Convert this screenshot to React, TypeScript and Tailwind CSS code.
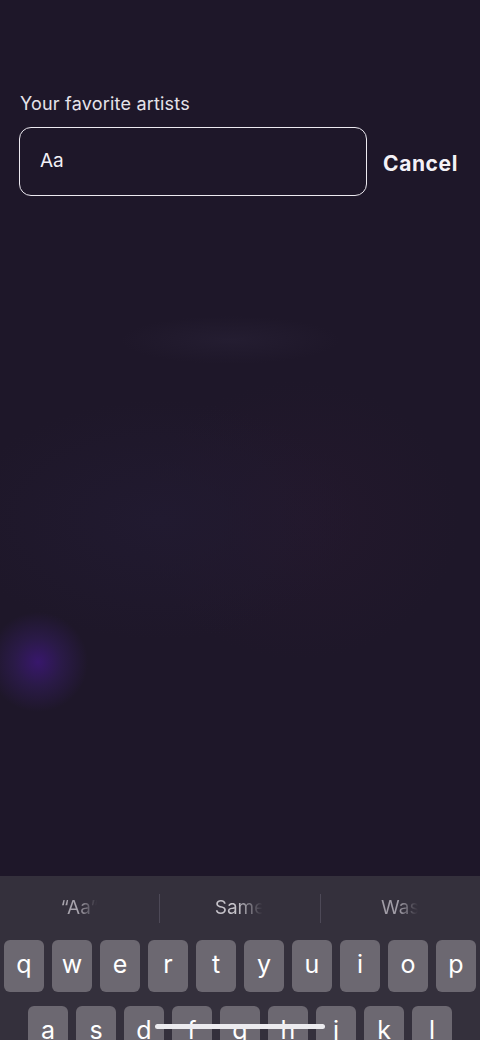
import { useState } from "react";

const ROW1 = ["q", "w", "e", "r", "t", "y", "u", "i", "o", "p"];
const ROW2 = ["a", "s", "d", "f", "g", "h", "j", "k", "l"];

const SUGGESTIONS = [
  { text: "“Aa”", from: "#a8a4ad" },
  { text: "Same", from: "#c6c3ca" },
  { text: "Was", from: "#a19da7" },
];

function Key({ label }: { label: string }) {
  return (
    <div className="w-10 h-[52px] shrink-0 rounded-[6px] bg-[#6c6871] flex items-center justify-center text-[25px] leading-none text-white pb-1">
      {label}
    </div>
  );
}

export default function App() {
  const [query, setQuery] = useState("");

  return (
    <div
      className="relative w-[480px] h-[1040px] overflow-hidden flex flex-col bg-[#1e1729]"
      style={{ fontFamily: "Inter, 'Noto Sans', sans-serif" }}
    >
      {/* fundo desfocado */}
      <div className="flex-1 flex flex-col bg-[radial-gradient(circle_at_38px_662px,#38176c_0px,#2a1a47_24px,transparent_50px),radial-gradient(ellipse_110px_24px_at_230px_340px,#241d31,transparent),radial-gradient(ellipse_200px_120px_at_160px_520px,#211a30,transparent),radial-gradient(ellipse_160px_140px_at_300px_520px,#23182c,transparent)]">
        <div className="pt-[93px] px-5">
          <label className="block text-[18px] leading-[22px] text-[#e6e3ea] tracking-[0.2px]">
            Your favorite artists
          </label>
          <div className="mt-3 flex items-center gap-4">
            <div className="w-[348px] h-[69px] -ml-px rounded-[12px] border-[1.5px] border-[#ece9f0] flex items-center px-5">
              <input
                value={query}
                onChange={(e) => setQuery(e.target.value)}
                placeholder="Aa"
                className="w-full bg-transparent text-[19px] text-white placeholder:text-[#f2f0f5] outline-none"
              />
            </div>
            <button className="text-[21px] font-bold tracking-[0.6px] text-[#f3f1f6] pt-1">Cancel</button>
          </div>
        </div>
      </div>

      {/* teclado */}
      <div className="h-[164px] shrink-0 overflow-hidden bg-[#34303c] flex flex-col">
        <div className="h-[64px] shrink-0 flex items-center">
          {SUGGESTIONS.map((s, i) => (
            <div
              key={s.text}
              className={`flex-1 h-[29px] flex items-center justify-center ${i > 0 ? "border-l border-[#4d4957]" : ""}`}
            >
              <span
                className="text-[19px] bg-clip-text text-transparent"
                style={{ backgroundImage: `linear-gradient(90deg, ${s.from} 45%, transparent 95%)` }}
              >
                {s.text}
              </span>
            </div>
          ))}
        </div>
        <div className="shrink-0 flex gap-2 px-1">
          {ROW1.map((k) => (
            <Key key={k} label={k} />
          ))}
        </div>
        <div className="shrink-0 mt-[14px] flex gap-2 pl-7">
          {ROW2.map((k) => (
            <Key key={k} label={k} />
          ))}
        </div>
      </div>

      <div className="absolute left-[155px] bottom-[11px] w-[170px] h-[5px] rounded-full bg-[#ecebef]" />
    </div>
  );
}
